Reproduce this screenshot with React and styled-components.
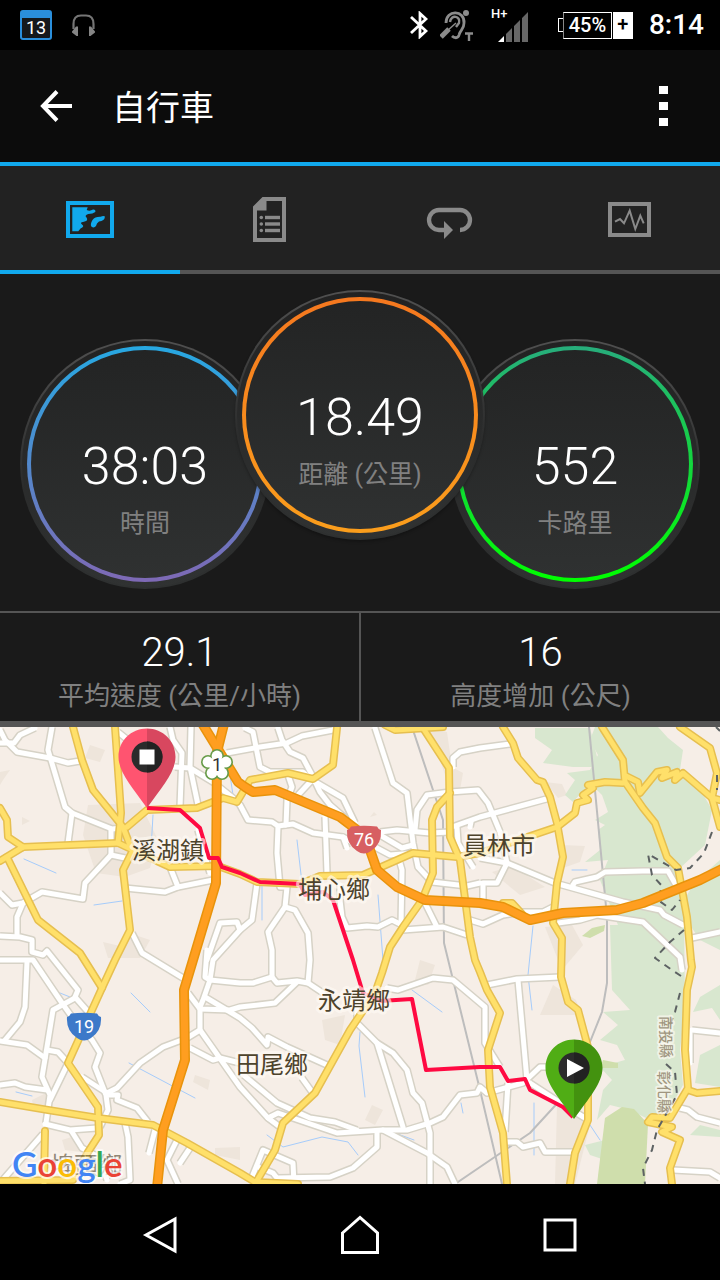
// src/App.jsx

import React from "react";
import styled, { createGlobalStyle, ThemeProvider } from "styled-components";

const theme = {
  colors: {
    accent: "#11a9ed",
    bar: "#0c0c0c",
    tabs: "#222222",
    panel: "#1a1a1a",
    line: "#555555",
    icon: "#8a8a8a",
    label: "#808080",
    white: "#ffffff",
  },
  fonts: {
    main: `Roboto, "Noto Sans CJK TC", sans-serif`,
  },
};

const GlobalStyle = createGlobalStyle`
  * {
    box-sizing: border-box;
  }

  body {
    margin: 0;
    background: #000;
    font-family: ${theme.fonts.main};
    color: #fff;
  }

  button {
    border: 0;
    padding: 0;
    background: none;
    color: inherit;
    font: inherit;
    cursor: pointer;
  }

  svg {
    display: block;
  }
`;

const StatusBar = styled.div`
  display: flex;
  align-items: center;
  justify-content: space-between;
  height: 50px;
  padding: 0 16px 0 20px;
  background: #000;
`;

const StatusGroup = styled.div`
  display: flex;
  align-items: center;
  gap: ${({ $gap }) => $gap}px;
`;

const CalendarBadge = styled.div`
  width: 32px;
  height: 30px;
  border: 2px solid #2a8fdc;
  border-top-width: 8px;
  border-radius: 3px;
  background: #15181b;
  font-size: 18px;
  line-height: 20px;
  text-align: center;
`;

const Battery = styled.div`
  display: flex;
  align-items: center;
  margin-left: 16px;
  font-size: 20px;
  font-weight: 500;

  .tip {
    width: 5px;
    height: 14px;
    border: 1px solid #fff;
    border-right: 0;
  }

  .level {
    height: 27px;
    width: 49px;
    border: 1px solid #fff;
    border-left-color: #888;
    line-height: 25px;
    text-align: center;
  }

  .plus {
    margin-left: 1px;
    width: 20px;
    height: 27px;
    background: #fff;
    color: #000;
    line-height: 25px;
    text-align: center;
  }
`;

const Clock = styled.span`
  margin-left: 4px;
  font-size: 28px;
  font-weight: 500;
  line-height: 32px;
`;

const AppBar = styled.header`
  display: flex;
  align-items: center;
  height: 116px;
  padding: 0 50px 0 40px;
  background: ${({ theme }) => theme.colors.bar};
  border-bottom: 4px solid ${({ theme }) => theme.colors.accent};

  h1 {
    flex: 1;
    margin: 0 0 0 40px;
    padding-top: 4px;
    font-size: 34px;
    font-weight: 400;
    line-height: 48px;
  }
`;

const Tabs = styled.nav`
  display: flex;
  background: ${({ theme }) => theme.colors.tabs};
`;

const Tab = styled.button`
  display: flex;
  flex: 1;
  align-items: center;
  justify-content: center;
  height: 108px;
  color: ${({ theme, $active }) =>
    $active ? theme.colors.accent : theme.colors.icon};
  border-bottom: 4px solid
    ${({ theme, $active }) =>
      $active ? theme.colors.accent : theme.colors.line};
`;

const Dials = styled.section`
  display: flex;
  justify-content: center;
  align-items: flex-end;
  padding: 16px 0 22px;
  background: ${({ theme }) => theme.colors.panel};
`;

const Dial = styled.div`
  position: relative;
  z-index: ${({ $raised }) => ($raised ? 1 : 0)};
  width: 250px;
  height: 250px;
  margin-bottom: ${({ $raised }) => ($raised ? 49 : 0)}px;
  padding: 5px;
  border: 2px solid transparent;
  border-radius: 50%;
  background:
    linear-gradient(#222222, #303232) padding-box,
    linear-gradient(#505050, #2b2c2c 60%, #2e3030) border-box;
  box-shadow: ${({ $raised }) =>
    $raised ? "0 2px 3px rgba(0, 0, 0, 0.25)" : "none"};

  & + & {
    margin-left: -35px;
  }
`;

const Ring = styled.div`
  display: flex;
  flex-direction: column;
  align-items: center;
  height: 100%;
  padding-top: 87px;
  border: 4px solid transparent;
  border-radius: 50%;
  background:
    linear-gradient(#232424, #2f3131) padding-box,
    linear-gradient(${({ $from, $to }) => `${$from}, ${$to}`}) border-box;
`;

const Value = styled.div`
  font-size: ${({ $large }) => ($large ? 52 : 40)}px;
  font-weight: 300;
  line-height: ${({ $large }) => ($large ? 60 : 44)}px;
`;

const Label = styled.div`
  font-size: 25px;
  line-height: 36px;
  color: ${({ theme }) => theme.colors.label};
`;

const DialLabel = styled(Label)`
  margin-top: 9px;
`;

const StatLabel = styled(Label)`
  margin-top: 3px;
  font-size: 26px;
`;

const Stats = styled.section`
  display: flex;
  background: ${({ theme }) => theme.colors.panel};
  border-top: 2px solid ${({ theme }) => theme.colors.line};
  border-bottom: 6px solid ${({ theme }) => theme.colors.line};
`;

const Stat = styled.div`
  flex: 1;
  height: 108px;
  padding-top: 18px;
  text-align: center;

  & + & {
    border-left: 2px solid ${({ theme }) => theme.colors.line};
  }
`;

const MapView = styled.svg`
  width: 100%;
  height: auto;
  background: #f6eee7;
`;

const Road = styled.path`
  fill: none;
  stroke: ${({ $color }) => $color};
  stroke-width: ${({ $width }) => $width}px;
  stroke-linejoin: round;
  stroke-linecap: ${({ $cap }) => $cap || "round"};
`;

const TownName = styled.text`
  font-family: "Noto Sans CJK TC", sans-serif;
  font-size: 24px;
  fill: #4d432c;
  stroke: rgba(255, 250, 244, 0.65);
  stroke-width: 6px;
  stroke-linejoin: round;
  paint-order: stroke;
  text-anchor: middle;
`;

const CountyName = styled(TownName)`
  font-size: 14px;
  font-weight: 500;
  fill: #a0967f;
  stroke-width: 4px;
`;

const ShieldText = styled.text`
  font-size: 18px;
  fill: ${({ $color }) => $color || "#fff"};
  text-anchor: middle;
`;

const Logo = styled.text`
  font-family: Lato, sans-serif;
  font-size: 35px;
  font-weight: 600;
  stroke: rgba(255, 255, 255, 0.7);
  stroke-width: 4px;
  stroke-linejoin: round;
  paint-order: stroke;
`;

const NavBar = styled.nav`
  display: flex;
  padding: 6px 60px 0;
  background: #000;
`;

const NavButton = styled.button`
  display: flex;
  flex: 1;
  align-items: center;
  justify-content: center;
  height: 90px;
`;

// Map data, in map units (720 wide)

const lanes = [
  "M0 730L5 740L17 752L50 758L68 763L80 761",
  "M0 743H14L20 735L35 728",
  "M52 727L48 750L65 807L72 813L112 829L123 828",
  "M72 813L68 843",
  "M111 829V855L125 858",
  "M111 855L85 883L83 899L42 892L23 903L12 905L0 893",
  "M23 903L17 917V936",
  "M0 936L20 937L32 940L32 952L43 955L47 951L78 990L75 997L90 1014",
  "M0 960H33L62 1003L72 1017L92 1040L100 1053L95 1067L106 1095L108 1110L100 1127",
  "M27 962L25 1007L20 1022L5 1040",
  "M0 1041L27 1045L45 1058",
  "M75 998L53 1010L47 1047L42 1077L50 1095L46 1123",
  "M47 1050L58 1052L68 1063L50 1100",
  "M0 1085L15 1083L25 1087L47 1090",
  "M82 1077L107 1093L117 1088L140 1063L163 1047L187 1038L200 1030",
  "M107 1095H118L117 1100L137 1108L148 1122",
  "M45 1124L70 1130L97 1128",
  "M72 1132L82 1148L100 1158L107 1180",
  "M43 1134L0 1183",
  "M125 1123L128 1137L130 1180L120 1184",
  "M155 1130L149 1153",
  "M177 1140L167 1160L178 1184",
  "M190 1148L180 1163",
  "M118 732L128 740L140 760",
  "M132 933L142 953L183 978",
  "M125 888L165 892L178 887L213 880",
  "M170 867L178 887",
  "M198 830L202 847L210 873",
  "M170 727L173 740L182 753L180 807",
  "M191 727L190 767L198 805",
  "M175 767L190 768L213 782L233 798L240 805L248 820L272 822L278 826L293 824L313 833L343 837L352 842",
  "M227 753L260 747L287 743L302 736L333 730",
  "M207 950L205 977L210 980L240 983L253 983L272 977L277 983L297 981L308 983L323 993",
  "M207 960L220 923L237 922L240 930L213 960L210 980L203 1000L200 1007V1030L240 1087L268 1118L280 1127",
  "M257 883L252 920L240 930",
  "M188 993L200 1009L230 1010L240 1007L275 1003L297 982",
  "M205 997L240 1018L252 1028L267 1045L268 1037L287 1047L327 1065",
  "M190 1048L213 1060L220 1058L240 1063",
  "M245 728L253 732L260 767L270 772H303L312 780L343 798L355 823",
  "M278 728L282 740L290 752L303 758L312 775L320 792L330 805L345 818",
  "M312 780L298 795",
  "M288 775L292 787L287 800L286 825",
  "M278 827L277 853L280 887L287 887L285 907L268 932L272 950V977",
  "M325 817L327 873",
  "M343 837L347 848",
  "M285 907L295 910L308 933L310 960L308 983",
  "M240 1072L277 1103L310 1118L335 1122L357 1130",
  "M268 1118L278 1113L337 1133L383 1130H407L430 1123L443 1117L460 1095L477 1093L480 1087L487 1093L523 1083L540 1067H553",
  "M302 1078L312 1092",
  "M357 1010V1023L377 1043L403 1127",
  "M377 1043L393 1053L407 1070L413 1093L422 1103L430 1133V1184",
  "M383 1130L427 1153L447 1167L455 1184",
  "M377 1132V1147L353 1168L330 1177L277 1178L273 1173L258 1167",
  "M252 1177L263 1150L293 1163L294 1184",
  "M387 988L398 990L433 978L453 980L485 1007V1043L500 1067",
  "M340 885V900L342 917L347 928L367 926L378 927L392 920L402 925",
  "M400 863L402 870L401 925",
  "M403 930L443 927L467 935",
  "M425 903L437 927",
  "M375 728L393 783L407 793L413 843L418 867L432 882L467 886L480 883",
  "M375 847L390 855L415 853",
  "M380 832L397 830L430 833L450 832",
  "M380 835L402 848L413 845",
  "M415 830L417 810L427 795L450 792L478 790L488 803L500 832L507 863",
  "M453 767V758L460 752L480 748L510 744",
  "M452 827L480 817L550 798",
  "M457 827L458 843L473 867",
  "M470 827L471 822",
  "M470 920L483 924L503 915L523 912H543L553 907",
  "M480 858L507 863L555 883L623 902L660 910L664 915L683 925",
  "M507 863L497 883H483V900",
  "M573 885L575 882L597 877L605 872L643 871H668L677 887",
  "M558 923L580 920L597 915L643 922L680 957L682 970",
  "M692 938L720 932",
  "M487 985L517 979L560 977",
  "M518 980L527 1080",
  "M508 1083L505 1132",
  "M530 1083L567 1107L585 1118",
  "M507 1142H517L523 1147L540 1143L545 1152H575",
  "M692 1030L720 1033",
  "M690 1032V1063",
  "M680 1108L688 1110L697 1117L720 1123",
  "M673 1170L710 1172L720 1178",
];

const mainRoads = [
  "M73 727L82 760L93 790L123 827L131 848",
  "M115 727L121 813L118 843L133 850L123 870L130 930L115 960L102 988L68 1063L98 1107L99 1135L88 1152L73 1180L0 1181",
  "M0 861L23 847L118 843",
  "M0 808L7 820L8 837L23 847",
  "M7 857L38 920L80 953L102 988",
  "M127 827L147 810L197 808L223 798L237 802L240 797L250 780L288 773L313 779L333 765L337 728",
  "M133 850L170 867L218 866L240 874L257 882L300 884L320 876L363 875L413 853L457 857L480 853L557 827L575 813L577 803L588 800L583 795L593 788L588 785L605 782L623 783",
  "M626 776L638 782L640 793L657 772L667 770L662 778L677 772L675 780L683 773L712 798L720 800",
  "M602 727L623 760L625 782L643 808L655 823L667 857L678 868L687 917L691 960L692 967L687 990L685 1050L688 1088L670 1118L652 1117L648 1122L672 1127L662 1132L680 1140L670 1168L672 1184",
  "M688 1090L697 1093L720 1091",
  "M680 727L710 748L717 773L712 798L720 827",
  "M503 727L513 743L518 758L537 780L543 782L550 797L557 823L563 857L557 883L553 923L562 938L561 977L568 1002L578 1010L588 1047V1120L575 1153L570 1184",
  "M385 725L395 730L443 727",
  "M423 728L449 768L450 837L460 860L470 937L475 960L480 972L487 990L500 1013L488 1050L490 1087L503 1133L507 1184",
  "M450 793L437 807L432 820L433 873L422 900L403 927L390 947L382 973L375 993L350 1030L315 1093L283 1123L275 1150L255 1184",
  "M0 1102L48 1110L98 1118L153 1125L187 1143L240 1173L255 1182L298 1184",
  "M45 1131L44 1184",
  "M503 903H512L522 914",
];

const highways = [
  "M225 720L217 752L216 883L193 960L184 990L185 1060L163 1130L157 1188",
  "M200 720L238 782L245 787L253 792L275 790L340 817L357 830L370 850L377 870L397 887L425 900L480 903L503 907L530 920L563 913L617 910L643 903L700 880L724 868",
];

const rails = [
  "M413 730L433 790L443 820L444 943L480 1090L502 1184",
  "M589 727L607 917L607 983L602 1012L588 1047",
  "M455 1184L530 1133L563 1097",
];

const streams = [
  "M153 815L151 850",
  "M24 859L56 873",
  "M94 905L122 901",
  "M230 775L233 795",
  "M131 993L150 1012",
  "M129 1063L195 1098",
  "M16 1092L32 1096",
  "M60 993L70 997",
  "M297 840L302 883",
  "M378 895L383 960",
  "M412 990L442 1012",
  "M360 1032L359 1046L365 1097",
  "M461 1103L463 1113",
  "M395 1133L414 1140",
  "M267 1135L283 1147L322 1137L348 1142L358 1155",
  "M572 870H587",
  "M533 926L528 975L532 1010",
  "M534 1103V1155",
  "M590 1125L600 1140",
  "M262 885V920",
];

const woods = [
  "M535 728H590L597 757L595 767L573 767L543 763L552 750L535 738Z",
  "M595 727H658L668 738L683 750L680 770L698 785L712 810L705 845L680 868L684 910L685 1010L680 1050L683 1085L670 1108L650 1120L630 1110L610 1105L597 1120L603 1090L612 1080L600 1067L625 1060L617 1045L600 1040L618 1025L603 1012L630 1010L612 990L610 925H618L608 900L600 880L608 860L585 862L600 850L598 830L605 825L595 820L608 812L602 795L590 783L573 802L565 795L575 780L567 773L590 770L598 755L590 740Z",
  "M720 860L695 882L684 900L690 925L700 940L720 950Z",
  "M720 985L700 997L693 1012L712 1008L720 1020Z",
  "M720 1045L700 1055L695 1083L720 1087Z",
  "M690 1135L700 1125L720 1130V1137Z",
  "M605 1140L585 1145L590 1155L605 1160Z",
];

const builtUp = [
  "M88 805L140 803L158 840L150 868L125 877L96 873L83 835Z",
  "M90 745L105 750L100 762L85 758Z",
  "M103 942L120 946L135 935L150 940L140 958L108 958Z",
  "M0 772L10 770L3 780L0 785Z",
  "M22 817L30 821L22 825Z",
  "M425 727L447 732L452 767L463 773L460 790L450 790L440 760Z",
  "M545 782L562 784L567 795L558 798Z",
  "M562 845L585 846L580 862L563 868Z",
  "M492 872L512 866L545 887L520 895Z",
  "M553 985L576 1000L590 1040L575 1015L540 1015Z",
  "M557 1105L590 1125L575 1184L555 1184Z",
  "M322 1020L345 1015L340 1045L325 1040Z",
  "M372 1105L383 1110L375 1125L365 1120Z",
  "M195 1075L210 1080L208 1090L193 1082Z",
  "M215 1148L240 1147V1160L215 1155Z",
  "M32 1100L48 1092L50 1110L34 1110Z",
  "M62 1140L78 1135L82 1152L65 1150Z",
  "M374 812L377 815L370 817Z",
  "M420 960L435 965L428 985L415 980Z",
  "M545 927L572 925L583 945L562 970Z",
];

const countyLine =
  "M712 832L704 853L690 868L676 870L662 862L648 854L652 875L662 886L658 900L672 910L680 900M684 930L670 942L655 958L672 970L684 978M680 993L675 1012L668 1030M666 1064L675 1072L677 1095L657 1130L652 1150L643 1168L645 1184M716 727L720 731M717 775V790";

const route =
  "M147 808L180 810L200 828L209 858L218 858L222 867L240 873L260 882L300 884L305 895L323 892L333 900L353 960L363 993L380 1001L412 999L426 1070L480 1067H500L508 1081L525 1079L530 1090L563 1107L573 1117";

const towns = [
  { name: "溪湖鎮", x: 168, y: 859 },
  { name: "埔心鄉", x: 334, y: 898 },
  { name: "員林市", x: 499, y: 854 },
  { name: "永靖鄉", x: 354, y: 1009 },
  { name: "田尾鄉", x: 272, y: 1073 },
];

// Petals of the freeway shield
const petals = [
  [0, -9],
  [9, -3],
  [5, 8],
  [-5, 8],
  [-9, -3],
];

const dials = [
  { value: "38:03", label: "時間", from: "#27a8e2", to: "#7e69b5" },
  {
    value: "18.49",
    label: "距離 (公里)",
    from: "#f5781f",
    to: "#fb9e1c",
    raised: true,
  },
  { value: "552", label: "卡路里", from: "#27ad7c", to: "#00ff00" },
];

const stats = [
  { value: "29.1", label: "平均速度 (公里/小時)" },
  { value: "16", label: "高度增加 (公尺)" },
];

const MapIcon = () => (
  <svg width="48" height="48" viewBox="0 0 48 48" fill="currentColor">
    <path d="M0 7H48V44H0ZM4 11V40H44V11Z" fillRule="evenodd" />
    <path d="M6.300 13.300H21.700L20.700 16Q24 17.500 27 15.500Q30 15.300 29.300 18Q27 20 22.300 20Q18 21.500 20.500 23.500Q23 27 17 28Q13.500 28.500 16 30.500Q19 32.500 14.500 34.500L12.300 37.300H6.300Z" />
    <path d="M39 22.500Q37.500 21.500 34.500 22.700Q29 22.500 26.500 26Q24 30 25.300 32.500Q28 34.500 30 32Q30.500 29 33 27.500Q38.500 27 39 22.500Z" />
  </svg>
);

const ReportIcon = () => (
  <svg width="48" height="48" viewBox="0 0 48 48" fill="currentColor">
    <path
      d="M7 12.500L16.500 3H40V48H7ZM20.500 7V16.500H11V44H36V7Z"
      fillRule="evenodd"
    />
    {[23.5, 30, 36.5].map((y) => (
      <g key={y}>
        <circle cx="15.300" cy={y} r="1.800" />
        <rect x="19" y={y - 1.7} width="15" height="3.400" />
      </g>
    ))}
  </svg>
);

const LapsIcon = () => (
  <svg width="48" height="48" viewBox="0 0 48 48">
    <path
      d="M34 36A10 10 0 0 0 34 16H13A10 10 0 0 0 13 36H19"
      fill="none"
      stroke="currentColor"
      strokeWidth="4.300"
    />
    <path d="M18 27L27 36L18 45Z" fill="currentColor" />
  </svg>
);

const ChartIcon = () => (
  <svg
    width="48"
    height="48"
    viewBox="0 0 48 48"
    fill="none"
    stroke="currentColor"
  >
    <rect x="4" y="10" width="39" height="31" strokeWidth="4" />
    <path
      d="M9 27.700L14 25L18 29.300L23.700 16.700L29.300 35L34.300 21.700L37.700 29.300"
      strokeWidth="2"
    />
  </svg>
);

const tabs = [
  { name: "地圖", icon: <MapIcon /> },
  { name: "統計", icon: <ReportIcon /> },
  { name: "圈數", icon: <LapsIcon /> },
  { name: "圖表", icon: <ChartIcon /> },
];

const Pin = ({ x, y, left, right, children }) => (
  <g transform={`translate(${x} ${y})`}>
    <path
      d="M0 -28.500C-16 -28.500 -28.500 -16 -28.500 0C-28.500 15 -15 30 0 51Z"
      fill={left}
    />
    <path
      d="M0 -28.500C16 -28.500 28.500 -16 28.500 0C28.500 15 15 30 0 51Z"
      fill={right}
    />
    <circle r="15.500" fill="#2b2b2b" />
    <path d="M0 -15.500A15.500 15.500 0 0 1 0 15.500Z" fill="#222" />
    {children}
  </g>
);

const RouteMap = () => (
  <MapView viewBox="0 727 720 457" role="img" aria-label="路線地圖">
    {builtUp.map((d) => (
      <path key={d} d={d} fill="#eee5db" />
    ))}
    {woods.map((d) => (
      <path key={d} d={d} fill="#d8e7cf" />
    ))}
    <path
      d="M605 1118L622 1107L634 1109L648 1124L645 1184H597Z"
      fill="#cfdeac"
    />
    <path d="M603 1060L618 1063V1068H600Z" fill="#cfdeac" />
    <path d="M582 936L592 928L605 925L604 931L590 938Z" fill="#cfdeac" />
    {streams.map((d) => (
      <Road key={d} d={d} $color="#a6ccfb" $width={1} />
    ))}
    {rails.map((d) => (
      <Road key={d} d={d} $color="#bdbdbd" $width={2} />
    ))}
    {lanes.map((d) => (
      <Road key={d} d={d} $color="#d6d2c6" $width={8} $cap="butt" />
    ))}
    {lanes.map((d) => (
      <Road key={d} d={d} $color="#ffffff" $width={5} />
    ))}
    {mainRoads.map((d) => (
      <Road key={d} d={d} $color="#e6bf50" $width={8} />
    ))}
    {mainRoads.map((d) => (
      <Road key={d} d={d} $color="#ffe06a" $width={5} />
    ))}
    <Road
      d={countyLine}
      $color="#5d6263"
      $width={2}
      $cap="butt"
      strokeDasharray="7 6"
    />
    {highways.map((d) => (
      <Road key={d} d={d} $color="#e8930c" $width={10} />
    ))}
    {highways.map((d) => (
      <Road key={d} d={d} $color="#ff9e20" $width={7} />
    ))}
    <Road d={route} $color="#ff0a42" $width={4} $cap="butt" />

    {towns.map(({ name, x, y }) => (
      <TownName key={name} x={x} y={y}>
        {name}
      </TownName>
    ))}
    <TownName x={86} y={1174} opacity="0.6">
      埤頭鄉
    </TownName>
    <CountyName transform="translate(661 1037) rotate(90)">南投縣</CountyName>
    <CountyName transform="translate(659 1092) rotate(90)">彰化縣</CountyName>

    <g transform="translate(217 765)">
      {petals.map(([cx, cy]) => (
        <circle key={`${cx},${cy}`} cx={cx} cy={cy} r="7" fill="#679b48" />
      ))}
      {petals.map(([cx, cy]) => (
        <circle key={`${cx},${cy}`} cx={cx} cy={cy} r="5.400" fill="#fff" />
      ))}
      <circle r="8" fill="#fff" />
      <ShieldText y="6" $color="#333">
        1
      </ShieldText>
    </g>
    <g transform="translate(364 840)">
      <path
        d="M-13 -13.500Q0 -15 13 -13.500Q14 -11 17 -10Q18 4 7 11Q0 16 -7 11Q-18 4 -17 -10Q-14 -11 -13 -13.500Z"
        fill="#d75f62"
      />
      <ShieldText y="6">76</ShieldText>
    </g>
    <g transform="translate(84 1027)">
      <path
        d="M-13 -13.500Q0 -15 13 -13.500Q14 -11 17 -10Q18 4 7 11Q0 16 -7 11Q-18 4 -17 -10Q-14 -11 -13 -13.500Z"
        fill="#3c79c9"
      />
      <ShieldText y="6">19</ShieldText>
    </g>

    <Pin x={147} y={757} left="#ff5470" right="#d8475f">
      <rect x="-7.500" y="-7.500" width="15" height="15" fill="#fff" />
    </Pin>
    <Pin x={574} y={1068} left="#50ad15" right="#43920f">
      <path d="M-7 -9L10 0L-7 9Z" fill="#fff" />
    </Pin>

    <Logo x={12} y={1177}>
      <tspan fill="#4285f4">G</tspan>
      <tspan fill="#ea4335">o</tspan>
      <tspan fill="#fbbc05">o</tspan>
      <tspan fill="#4285f4">g</tspan>
      <tspan fill="#34a853">l</tspan>
      <tspan fill="#ea4335">e</tspan>
    </Logo>
  </MapView>
);

const PhoneStatus = () => (
  <StatusBar>
    <StatusGroup $gap={20}>
      <CalendarBadge>13</CalendarBadge>
      <svg width="23" height="23" viewBox="0 0 23 23">
        <path
          d="M1.500 15V10Q1.500 1.500 9 1.500H14Q21.500 1.500 21.500 10V15"
          fill="none"
          stroke="#757575"
          strokeWidth="2.200"
        />
        <path
          d="M0 17.500L4 12.500H6V22H4.500L0 18.500ZM23 17.500L19 12.500H17V22H18.500L23 18.500Z"
          fill="#858585"
        />
      </svg>
    </StatusGroup>
    <StatusGroup $gap={12}>
      <svg
        width="18"
        height="28"
        viewBox="0 0 18 28"
        fill="none"
        stroke="#fff"
        strokeWidth="2.800"
      >
        <path d="M1 6L16 20L10 25.500V2.500L16 8L1 22" />
      </svg>
      <svg
        width="34"
        height="32"
        viewBox="0 0 34 32"
        fill="none"
        stroke="#8c8c8c"
      >
        <path
          d="M6 14C6 0 25 1 24 14C24 21 20 21 19 26C18 30 14 29 12 27"
          strokeWidth="2.800"
        />
        <path d="M10 13C11 5 21 7 19 14L16 18" strokeWidth="2.400" />
        <path d="M1 28L9 20" strokeWidth="5" />
        <path d="M16 14L7 22" strokeWidth="1.500" />
        <circle cx="26" cy="4" r="3" fill="#8c8c8c" stroke="none" />
        <path d="M25 24.500H33M29 24.500V32" strokeWidth="2.400" />
      </svg>
      <svg width="44" height="36" viewBox="-4 0 44 36">
        <text x="1" y="11" fill="#fff" fontSize="13" fontWeight="500">
          H+
        </text>
        <path d="M8 35L14 29V35Z" fill="#fff" />
        <path
          d="M16 27L22 21V35H16ZM24 19L30 13V35H24ZM32 11L38 5V35H32Z"
          fill="#666"
        />
      </svg>
      <Battery>
        <span className="tip" />
        <span className="level">45%</span>
        <span className="plus">+</span>
      </Battery>
      <Clock>8:14</Clock>
    </StatusGroup>
  </StatusBar>
);

const App = () => {
  return (
    <ThemeProvider theme={theme}>
      <GlobalStyle />
      <PhoneStatus />
      <AppBar>
        <button aria-label="返回">
          <svg
            width="32"
            height="32"
            viewBox="0 0 32 32"
            fill="none"
            stroke="#fff"
            strokeWidth="4"
          >
            <path d="M17 1.500L3 16L17 30.500M3 16H32" />
          </svg>
        </button>
        <h1>自行車</h1>
        <button aria-label="更多">
          <svg width="12" height="40" viewBox="0 0 12 40" fill="#fff">
            <path d="M1 0H10V8H1ZM1 16H10V24H1ZM1 32H10V40H1Z" />
          </svg>
        </button>
      </AppBar>
      <Tabs>
        {tabs.map(({ name, icon }, idx) => (
          <Tab key={name} aria-label={name} $active={idx === 0}>
            {icon}
          </Tab>
        ))}
      </Tabs>
      <Dials>
        {dials.map(({ value, label, from, to, raised }) => (
          <Dial key={label} $raised={raised}>
            <Ring $from={from} $to={to}>
              <Value $large>{value}</Value>
              <DialLabel>{label}</DialLabel>
            </Ring>
          </Dial>
        ))}
      </Dials>
      <Stats>
        {stats.map(({ value, label }) => (
          <Stat key={label}>
            <Value>{value}</Value>
            <StatLabel>{label}</StatLabel>
          </Stat>
        ))}
      </Stats>
      <RouteMap />
      <NavBar>
        <NavButton aria-label="上一頁">
          <svg
            width="36"
            height="40"
            viewBox="0 0 36 40"
            fill="none"
            stroke="#fff"
            strokeWidth="3"
          >
            <path d="M33 4V36L4 20Z" />
          </svg>
        </NavButton>
        <NavButton aria-label="首頁">
          <svg
            width="40"
            height="40"
            viewBox="0 0 40 40"
            fill="none"
            stroke="#fff"
            strokeWidth="3"
          >
            <path d="M2.500 18L20 2.500L37.500 18V37.500H2.500Z" />
          </svg>
        </NavButton>
        <NavButton aria-label="最近使用">
          <svg
            width="34"
            height="34"
            viewBox="0 0 34 34"
            fill="none"
            stroke="#fff"
            strokeWidth="3"
          >
            <path d="M2 2H32V32H2Z" />
          </svg>
        </NavButton>
      </NavBar>
    </ThemeProvider>
  );
};

export default App;
